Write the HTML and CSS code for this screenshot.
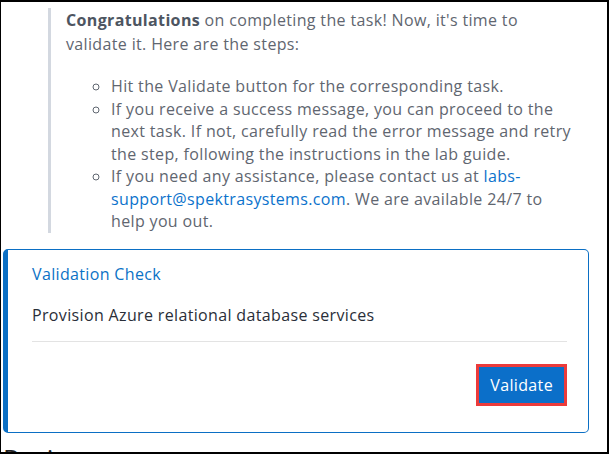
FILE: index.html
```html
<!DOCTYPE html>
<html lang="en">
<head>
<meta charset="utf-8">
<title>Validation</title>
<link rel="stylesheet" href="styles.css">
</head>
<body>
<div class="frame">
  <blockquote class="note">
    <p class="intro"><strong>Congratulations</strong> on completing the task! Now, it's time to validate it. Here are the steps:</p>
    <ul class="steps">
      <li>Hit the Validate button for the corresponding task.</li>
      <li>If you receive a success message, you can proceed to the next task. If not, carefully read the error message and retry the step, following the instructions in the lab guide.</li>
      <li>If you need any assistance, please contact us at <a class="link" href="#">labs-support@spektrasystems.com</a>. We are available 24/7 to help you out.</li>
    </ul>
  </blockquote>
  <div class="card">
    <div class="card-title">Validation Check</div>
    <p class="card-text">Provision Azure relational database services</p>
    <hr class="rule">
    <div class="actions">
      <button class="btn" type="button">Validate</button>
    </div>
  </div>
  <h2 class="heading">Review</h2>
</div>
</body>
</html>
```
FILE: styles.css
```css
* { box-sizing: border-box; }
html, body { margin: 0; padding: 0; background: #fff; }
body {
  font-family: "Open Sans", "Liberation Sans", sans-serif;
  font-size: 16px;
  letter-spacing: 0.35px;
  color: #5f6670;
}
.frame {
  width: 609px;
  height: 454px;
  border: 2px solid #000;
  border-left-width: 1px;
  overflow: hidden;
  padding: 6px 18px 0 1px;
}
.note {
  margin: 0 12px 16px 46px;
  padding: 0 0 0 15px;
  border-left: 3px solid #d3d8e0;
}
.intro {
  margin: 0 0 19px;
  line-height: 24px;
}
.intro strong { color: #4d5561; font-weight: 700; }
.steps {
  margin: 0;
  padding-left: 45px;
  list-style: circle;
  line-height: 22.5px;
}
.link { color: #0b72cc; text-decoration: none; }
.card {
  margin-left: 1px;
  border: 1px solid #0b6fc4;
  border-left: 5px solid #0b6fc4;
  border-radius: 5px;
  padding: 13px 21px 26px 24px;
}
.card-title {
  color: #0b72c6;
  line-height: 22.5px;
}
.card-text {
  margin: 19px 0 0;
  color: #2a2e38;
  line-height: 22.5px;
}
.rule {
  margin: 14px 0 0;
  border: 0;
  border-top: 1px solid #e3e3e3;
}
.actions {
  display: flex;
  justify-content: flex-end;
  margin-top: 22px;
}
.btn {
  font-family: inherit;
  font-size: 16px;
  letter-spacing: 0.35px;
  font-weight: 500;
  color: #fff;
  background: #0b6fc9;
  border: 3px solid #ec3b3b;
  padding: 0 11px;
  height: 42px;
  cursor: pointer;
}
.heading {
  margin: 10px 0 0 1px;
  font-size: 26px;
  font-weight: 400;
  letter-spacing: 0;
  color: #222;
  line-height: 31px;
}
```
